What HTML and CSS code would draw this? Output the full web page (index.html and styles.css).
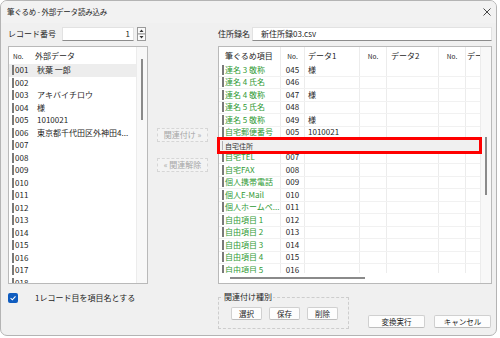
FILE: index.html
```html
<!DOCTYPE html>
<html lang="ja">
<head>
<meta charset="utf-8">
<title>筆ぐるめ - 外部データ読み込み</title>
<link rel="stylesheet" href="styles.css">
</head>
<body>
<div class="win">
  <div class="titlebar">
    <span class="title">筆ぐるめ - 外部データ読み込み</span>
    <svg class="close" width="8" height="8" viewBox="0 0 8 8"><path d="M0.5 0.5 L7.5 7.5 M7.5 0.5 L0.5 7.5" stroke="#333" stroke-width="0.9" fill="none"/></svg>
  </div>
  <div class="content">
    <div class="toprow">
      <div class="top-left">
        <span class="lbl-rec">レコード番号</span>
        <div class="field num-field">1</div>
        <svg class="spin" width="9" height="14" viewBox="0 0 9 14">
          <rect x="0.5" y="0.5" width="8" height="6.5" fill="#fafafa" stroke="#9a9a9a"/>
          <rect x="0.5" y="7" width="8" height="6.5" fill="#fafafa" stroke="#9a9a9a"/>
          <path d="M2.5 5 L4.5 2.6 L6.5 5 Z" fill="#333"/>
          <path d="M2.5 9 L4.5 11.4 L6.5 9 Z" fill="#333"/>
        </svg>
      </div>
      <div class="top-right">
        <span class="lbl-book">住所録名</span>
        <div class="field name-field">新住所録03.csv</div>
      </div>
    </div>

    <div class="main">
      <div class="list">
        <div class="list-body">
          <div class="lhead"><span class="lno hdr-no">No.</span><span>外部データ</span></div>
          <div class="lrow sel"><i class="mark"></i><span class="lno">001</span><span>秋葉 一郎</span></div>
          <div class="lrow"><i class="mark"></i><span class="lno">002</span><span></span></div>
          <div class="lrow"><i class="mark"></i><span class="lno">003</span><span>アキバイチロウ</span></div>
          <div class="lrow"><i class="mark"></i><span class="lno">004</span><span>様</span></div>
          <div class="lrow"><i class="mark"></i><span class="lno">005</span><span>1010021</span></div>
          <div class="lrow"><i class="mark"></i><span class="lno">006</span><span>東京都千代田区外神田4...</span></div>
          <div class="lrow"><i class="mark"></i><span class="lno">007</span></div>
          <div class="lrow"><i class="mark"></i><span class="lno">008</span></div>
          <div class="lrow"><i class="mark"></i><span class="lno">009</span></div>
          <div class="lrow"><i class="mark"></i><span class="lno">010</span></div>
          <div class="lrow"><i class="mark"></i><span class="lno">011</span></div>
          <div class="lrow"><i class="mark"></i><span class="lno">012</span></div>
          <div class="lrow"><i class="mark"></i><span class="lno">013</span></div>
          <div class="lrow"><i class="mark"></i><span class="lno">014</span></div>
          <div class="lrow"><i class="mark"></i><span class="lno">015</span></div>
          <div class="lrow"><i class="mark"></i><span class="lno">016</span></div>
          <div class="lrow"><i class="mark"></i><span class="lno">017</span></div>
          <div class="lrow"><i class="mark"></i><span class="lno">018</span></div>
        </div>
        <div class="vscroll"><div class="vthumb lthumb"></div></div>
      </div>

      <div class="mid">
        <div class="dis-btn">関連付け »</div>
        <div class="dis-btn">« 関連解除</div>
      </div>

      <div class="grid">
        <div class="gmain">
          <div class="ghead">
            <div class="c c1">筆ぐるめ項目</div>
            <div class="c c2 hno">No.</div>
            <div class="c c3">データ1</div>
            <div class="c c4 hno">No.</div>
            <div class="c c5">データ2</div>
            <div class="c c6 hno">No.</div>
            <div class="c c7">データ3</div>
          </div>
          <div class="gbody">
            <div class="grow"><div class="c c1 item"><i class="mark"></i>連名 3 敬称</div><div class="c c2">045</div><div class="c c3">様</div><div class="c c4"></div><div class="c c5"></div><div class="c c6"></div><div class="c c7"></div></div>
            <div class="grow"><div class="c c1 item"><i class="mark"></i>連名 4 氏名</div><div class="c c2">046</div><div class="c c3"></div><div class="c c4"></div><div class="c c5"></div><div class="c c6"></div><div class="c c7"></div></div>
            <div class="grow"><div class="c c1 item"><i class="mark"></i>連名 4 敬称</div><div class="c c2">047</div><div class="c c3">様</div><div class="c c4"></div><div class="c c5"></div><div class="c c6"></div><div class="c c7"></div></div>
            <div class="grow"><div class="c c1 item"><i class="mark"></i>連名 5 氏名</div><div class="c c2">048</div><div class="c c3"></div><div class="c c4"></div><div class="c c5"></div><div class="c c6"></div><div class="c c7"></div></div>
            <div class="grow"><div class="c c1 item"><i class="mark"></i>連名 5 敬称</div><div class="c c2">049</div><div class="c c3">様</div><div class="c c4"></div><div class="c c5"></div><div class="c c6"></div><div class="c c7"></div></div>
            <div class="grow"><div class="c c1 item"><i class="mark"></i>自宅郵便番号</div><div class="c c2">005</div><div class="c c3">1010021</div><div class="c c4"></div><div class="c c5"></div><div class="c c6"></div><div class="c c7"></div></div>
            <div class="grow"><div class="c c1 item"></div><div class="c c2"></div><div class="c c3"></div><div class="c c4"></div><div class="c c5"></div><div class="c c6"></div><div class="c c7"></div></div>
            <div class="grow"><div class="c c1 item"><i class="mark"></i>自宅TEL</div><div class="c c2">007</div><div class="c c3"></div><div class="c c4"></div><div class="c c5"></div><div class="c c6"></div><div class="c c7"></div></div>
            <div class="grow"><div class="c c1 item"><i class="mark"></i>自宅FAX</div><div class="c c2">008</div><div class="c c3"></div><div class="c c4"></div><div class="c c5"></div><div class="c c6"></div><div class="c c7"></div></div>
            <div class="grow"><div class="c c1 item"><i class="mark"></i>個人携帯電話</div><div class="c c2">009</div><div class="c c3"></div><div class="c c4"></div><div class="c c5"></div><div class="c c6"></div><div class="c c7"></div></div>
            <div class="grow"><div class="c c1 item"><i class="mark"></i>個人E-Mail</div><div class="c c2">010</div><div class="c c3"></div><div class="c c4"></div><div class="c c5"></div><div class="c c6"></div><div class="c c7"></div></div>
            <div class="grow"><div class="c c1 item"><i class="mark"></i>個人ホームペ...</div><div class="c c2">011</div><div class="c c3"></div><div class="c c4"></div><div class="c c5"></div><div class="c c6"></div><div class="c c7"></div></div>
            <div class="grow"><div class="c c1 item"><i class="mark"></i>自由項目 1</div><div class="c c2">012</div><div class="c c3"></div><div class="c c4"></div><div class="c c5"></div><div class="c c6"></div><div class="c c7"></div></div>
            <div class="grow"><div class="c c1 item"><i class="mark"></i>自由項目 2</div><div class="c c2">013</div><div class="c c3"></div><div class="c c4"></div><div class="c c5"></div><div class="c c6"></div><div class="c c7"></div></div>
            <div class="grow"><div class="c c1 item"><i class="mark"></i>自由項目 3</div><div class="c c2">014</div><div class="c c3"></div><div class="c c4"></div><div class="c c5"></div><div class="c c6"></div><div class="c c7"></div></div>
            <div class="grow"><div class="c c1 item"><i class="mark"></i>自由項目 4</div><div class="c c2">015</div><div class="c c3"></div><div class="c c4"></div><div class="c c5"></div><div class="c c6"></div><div class="c c7"></div></div>
            <div class="grow"><div class="c c1 item"><i class="mark"></i>自由項目 5</div><div class="c c2">016</div><div class="c c3"></div><div class="c c4"></div><div class="c c5"></div><div class="c c6"></div><div class="c c7"></div></div>
          </div>
          <div class="hscroll"><div class="hthumb"></div></div>
        </div>
        <div class="vscroll gscroll"><div class="vthumb gthumb"></div></div>
        <div class="drag"><i class="mark light"></i>自宅住所</div>
      </div>
    </div>

    <div class="bottom">
      <div class="chk-area">
        <span class="chk"><svg width="10" height="10" viewBox="0 0 10 10"><path d="M2.6 5.2 L4.3 6.8 L7.5 3.4" stroke="#fff" stroke-width="1.1" fill="none"/></svg></span>
        <span class="chk-label">1レコード目を項目名とする</span>
      </div>
      <div class="group">
        <span class="group-label">関連付け種別</span>
        <div class="group-btns">
          <div class="btn small">選択</div>
          <div class="btn small">保存</div>
          <div class="btn small">削除</div>
        </div>
      </div>
      <div class="actions">
        <div class="btn big">変換実行</div>
        <div class="btn big">キャンセル</div>
      </div>
    </div>
  </div>
</div>
</body>
</html>
```
FILE: styles.css
```css
* { box-sizing: border-box; }
body {
  margin: 0;
  background: #ffffff;
  font-family: "Noto Sans CJK JP", "Noto Sans", sans-serif;
  font-size: 8px;
  line-height: 12px;
  color: #1e1e1e;
}
.win {
  width: 497px;
  height: 336px;
  border: 1px solid #b4b4b4;
  border-radius: 7px;
  background: #f0f0f0;
  overflow: hidden;
  display: flex;
  flex-direction: column;
}
.titlebar {
  height: 22px;
  flex: none;
  display: flex;
  align-items: center;
  justify-content: space-between;
  padding: 0 5px 0 6px;
  background: #f2f2f2;
}
.title { font-size: 7.5px; letter-spacing: -0.2px; }
.content {
  display: flex;
  flex-direction: column;
  padding: 4px 0 0 7px;
}
.toprow { display: flex; height: 14px; }
.top-left { width: 210px; display: flex; align-items: center; }
.lbl-rec { width: 54px; white-space: nowrap; }
.field {
  height: 14px;
  background: #fff;
  border: 1px solid #e2e2e2;
  border-bottom: 1px solid #8c8c8c;
  line-height: 12px;
  padding: 0 4px;
  white-space: nowrap;
}
.num-field { width: 72px; text-align: right; padding-right: 3px; }
.spin { margin-left: 3px; }
.top-right { width: 274px; display: flex; align-items: center; }
.lbl-book { white-space: nowrap; flex: none; margin-right: 2px; }
.name-field { flex: 1; padding-left: 8px; }

.main { display: flex; height: 238px; margin-top: 5px; }
.list {
  width: 140px;
  border: 1px solid #b9b9b9;
  background: #fff;
  display: flex;
}
.list-body { flex: 1; overflow: hidden; }
.lhead { height: 17px; display: flex; align-items: center; padding-left: 4px; }
.hdr-no { width: 24px; font-size: 6.5px; }
.lrow {
  height: 12.5px;
  display: flex;
  align-items: center;
  padding-left: 3px;
  white-space: nowrap;
}
.lrow.sel { background: #ededed; }
.mark {
  display: inline-block;
  width: 2px;
  height: 10px;
  background: #7a7a7a;
  margin-right: 1px;
  flex: none;
}
.mark.light { background: #b0b0b0; width: 1px; height: 9px; margin-right: 2px; }
.lno { width: 22px; flex: none; }
.vscroll {
  width: 11px;
  flex: none;
  background: #f8f8f8;
  border-left: 1px solid #ececec;
}
.vthumb { width: 2px; background: #8a8a8a; margin-left: 4px; }
.lthumb { margin-top: 12px; height: 61px; }

.mid {
  width: 70px;
  display: flex;
  flex-direction: column;
  padding: 82px 0 0 9px;
  gap: 16px;
}
.dis-btn {
  width: 51px;
  height: 14px;
  border: 1px dashed #d6d6d6;
  background: #f3f3f3;
  color: #a6a6a6;
  font-size: 8px;
  text-align: center;
  line-height: 12px;
  white-space: nowrap;
}

.grid {
  width: 274px;
  border: 1px solid #b9b9b9;
  background: #fff;
  display: flex;
  position: relative;
}
.gmain { flex: 1; display: flex; flex-direction: column; overflow: hidden; }
.ghead { height: 17px; display: flex; flex: none; }
.ghead .c { display: flex; align-items: center; }
.hno { justify-content: center; font-size: 6.5px; }
.gbody { flex: 1; overflow: hidden; }
.grow {
  height: 12.5px;
  display: flex;
  border-bottom: 1px solid #f1f1f1;
}
.c {
  border-right: 1px solid #ececec;
  white-space: nowrap;
  overflow: hidden;
  flex: none;
  display: flex;
  align-items: center;
}
.c1 { width: 62px; padding-left: 3px; }
.c2 { width: 24px; justify-content: center; }
.c3 { width: 55px; padding-left: 3px; }
.c4 { width: 27px; }
.c5 { width: 52px; padding-left: 4px; }
.c6 { width: 27px; }
.c7 { flex: 1; padding-left: 1px; border-right: 0; }
.ghead .c1 { padding-left: 6px; }
.item { color: #2f9a35; }
.hscroll { height: 10px; flex: none; background: #fff; }
.hthumb { margin: 4px 0 0 11px; width: 135px; height: 2px; background: #8a8a8a; }
.gscroll { background: #f8f8f8; }
.gthumb { margin-top: 90px; height: 58px; }
.drag {
  position: absolute;
  left: -2px;
  top: 90px;
  width: 265px;
  height: 17px;
  border: 3px solid #ff0000;
  background: #f0f0f0;
  display: flex;
  align-items: center;
  padding-left: 2px;
  font-size: 7px;
  color: #333;
}

.bottom { display: flex; height: 51px; }
.chk-area { width: 210px; display: flex; align-items: flex-start; padding-top: 9px; }
.chk {
  width: 10px;
  height: 10px;
  border-radius: 2px;
  background: #0f5cbf;
  display: flex;
}
.chk-label { margin-left: 17px; line-height: 10px; }
.group {
  margin-top: 13px;
  height: 32px;
  border: 1px dashed #cdcdcd;
  padding: 0 10px 0 12px;
}
.group-label {
  display: block;
  width: max-content;
  height: 10px;
  line-height: 10px;
  margin: -6px 0 0 -8px;
  padding: 0 1px;
  background: #f0f0f0;
}
.group-btns { display: flex; gap: 7px; margin-top: 5px; }
.btn {
  height: 13px;
  background: #fdfdfd;
  border: 1px solid #d0d0d0;
  border-bottom-color: #bdbdbd;
  border-radius: 2px;
  text-align: center;
  line-height: 11px;
  font-size: 7.5px;
}
.btn.small { width: 31px; }
.actions {
  display: flex;
  gap: 9px;
  align-self: flex-end;
  margin: 0 0 7px 19px;
}
.btn.big { width: 57px; }
```
